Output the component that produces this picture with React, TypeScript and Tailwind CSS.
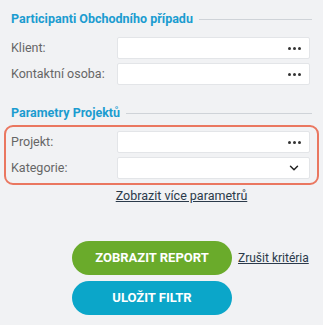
import { ChevronDown } from 'lucide-react';

function Dots() {
  return (
    <span className="flex items-center gap-[2px]">
      <span className="h-[3px] w-[3px] rounded-full bg-[#333]" />
      <span className="h-[3px] w-[3px] rounded-full bg-[#333]" />
      <span className="h-[3px] w-[3px] rounded-full bg-[#333]" />
    </span>
  );
}

function Row({ label, select = false }: { label: string; select?: boolean }) {
  return (
    <div className="flex items-center">
      <span className="w-[106px] text-[12.5px] text-[#666]">{label}</span>
      <div className="flex h-[22px] w-[193px] items-center justify-end rounded-[2px] border border-[#e3e5e8] bg-white pr-[8px]">
        {select ? <ChevronDown size={14} strokeWidth={2.5} className="text-[#222]" /> : <Dots />}
      </div>
    </div>
  );
}

function Heading({ title }: { title: string }) {
  return (
    <div className="flex h-[18px] items-center gap-[6px] pr-[11px]">
      <span className="text-[12.5px] font-bold text-[#1b9cd0]">{title}</span>
      <span className="h-px flex-1 bg-[#cfd3d8]" />
    </div>
  );
}

export default function App() {
  return (
    <div className="flex h-[325px] w-[327px] bg-white" style={{ fontFamily: 'Roboto, sans-serif' }}>
      <div className="w-[323px] bg-[#f1f2f4] pt-[10px]">
        <div className="pl-[11px]">
          <Heading title="Participanti Obchodního případu" />
          <div className="mt-[9px] flex flex-col gap-[4px]">
            <Row label="Klient:" />
            <Row label="Kontaktní osoba:" />
          </div>
        </div>
        <div className="mt-[19px] pl-[11px]">
          <Heading title="Parametry Projektů" />
        </div>
        <div className="mx-[4px] mt-[3px] flex flex-col gap-[4px] rounded-[9px] border-2 border-[#ea7760] py-[4px] pl-[5px]">
          <Row label="Projekt:" />
          <Row label="Kategorie:" select />
        </div>
        <div className="mt-[2px] text-center leading-[16px]">
          <a className="pl-[40px] text-[12.5px] text-[#2b3a4a] underline">Zobrazit více parametrů</a>
        </div>
        <div className="mt-[37px] flex items-center pl-[72px]">
          <button className="h-[34px] w-[160px] rounded-full bg-[#6aab2b] text-[13px] font-bold text-white">
            ZOBRAZIT REPORT
          </button>
          <a className="ml-[6px] text-[12px] text-[#2b3a4a] underline">Zrušit kritéria</a>
        </div>
        <div className="mt-[6px] pl-[72px]">
          <button className="h-[34px] w-[160px] rounded-full bg-[#0ba6c9] text-[13px] font-bold text-white">
            ULOŽIT FILTR
          </button>
        </div>
      </div>
    </div>
  );
}
